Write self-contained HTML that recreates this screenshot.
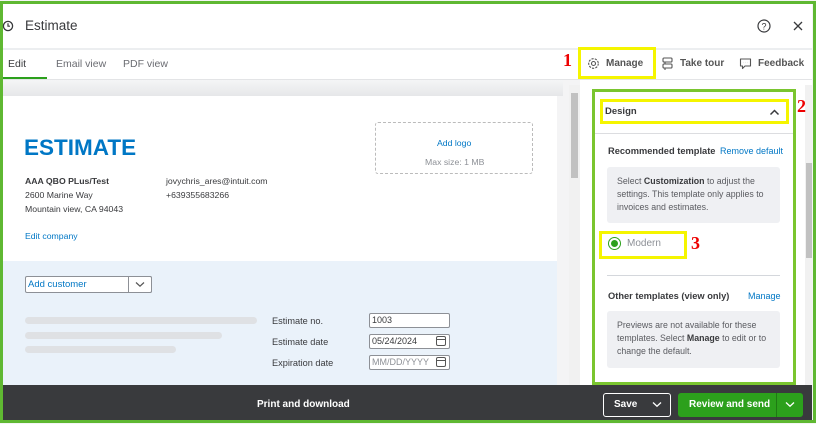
<!DOCTYPE html>
<html><head><style>
*{margin:0;padding:0;box-sizing:border-box}
body{width:816px;height:424px;overflow:hidden;background:#f4f5f4;font-family:"Liberation Sans",sans-serif;position:relative;color:#393a3d}
.a{position:absolute}
.t{font-size:10px;color:#393a3d;white-space:nowrap}
.lnk{color:#0077c5}
.in{position:absolute;height:15px;border:1px solid #8d9096;border-radius:2px;background:#fff;font-size:9px;padding:1px 2px;color:#393a3d}
.bar{position:absolute;height:7px;border-radius:4px;background:#dfe1e4}
.cal{position:absolute;width:10px;height:10px;border:1.3px solid #555;border-radius:2px}
.cal:before{content:"";position:absolute;left:0;right:0;top:2px;border-top:1.3px solid #555}
</style></head><body>
<div class="a" style="left:0;top:1px;width:816px;height:422px;border:3px solid #5fb832"></div>
<div class="a" style="left:3px;top:4px;width:809px;height:416px;background:#fff"></div>
<svg class="a" style="left:2px;top:20px" width="12" height="12" viewBox="0 0 12 12"><circle cx="6" cy="6" r="4.6" fill="none" stroke="#393a3d" stroke-width="1.3"/><path d="M6 3.3V6.2H8" fill="none" stroke="#393a3d" stroke-width="1.2"/></svg>
<div class="a" style="left:25px;top:18px;font-size:13.5px;color:#393a3d">Estimate</div>
<svg class="a" style="left:757px;top:19px" width="14" height="14" viewBox="0 0 14 14"><circle cx="7" cy="7" r="6" fill="none" stroke="#393a3d" stroke-width="1.2"/><text x="7" y="10.3" font-size="9" text-anchor="middle" fill="#393a3d" font-family="Liberation Sans">?</text></svg>
<svg class="a" style="left:793px;top:21px" width="10" height="10" viewBox="0 0 10 10"><path d="M1 1L9 9M9 1L1 9" stroke="#393a3d" stroke-width="1.3"/></svg>
<div class="a" style="left:3px;top:48px;width:809px;height:2px;background:#eceef0"></div>
<div class="a t" style="left:8px;top:58px;font-size:10.5px">Edit</div>
<div class="a t" style="left:56px;top:58px;font-size:10.5px;color:#6b6c72">Email view</div>
<div class="a t" style="left:123px;top:58px;font-size:10.5px;color:#6b6c72">PDF view</div>
<div class="a" style="left:3px;top:77px;width:44px;height:2px;background:#2ca01c"></div>
<div class="a" style="left:563px;top:50px;font-family:'Liberation Serif';font-weight:bold;font-size:18px;color:#e00">1</div>
<div class="a" style="left:578px;top:47px;width:78px;height:32px;border:3px solid #f5f500"></div>
<svg class="a" style="left:587px;top:57px" width="13" height="13" viewBox="0 0 13 13"><circle cx="6.5" cy="6.5" r="2" fill="none" stroke="#555" stroke-width="1.1"/><circle cx="6.5" cy="6.5" r="4.8" fill="none" stroke="#555" stroke-width="1.1" stroke-dasharray="2.2 1.2"/></svg>
<div class="a t" style="left:606px;top:58px;font-size:10px;font-weight:bold;color:#555">Manage</div>
<svg class="a" style="left:661px;top:57px" width="13" height="13" viewBox="0 0 13 13"><rect x="2" y="1" width="9" height="4" rx="1" fill="none" stroke="#555" stroke-width="1.1"/><rect x="2" y="7" width="9" height="4" rx="1" fill="none" stroke="#555" stroke-width="1.1"/><path d="M4 5V7M4 11V13" stroke="#555" stroke-width="1.1"/></svg>
<div class="a t" style="left:680px;top:58px;font-size:10px;font-weight:bold;color:#555">Take tour</div>
<svg class="a" style="left:739px;top:57px" width="13" height="13" viewBox="0 0 13 13"><path d="M1.5 2h10v7H6l-2.5 2.5V9h-2z" fill="none" stroke="#555" stroke-width="1.1" stroke-linejoin="round"/><path d="M4.5 5.5h.1M6.5 5.5h.1M8.5 5.5h.1" stroke="#555" stroke-width="1.2"/></svg>
<div class="a t" style="left:758px;top:58px;font-size:10px;font-weight:bold;color:#555">Feedback</div>
<div class="a" style="left:3px;top:79px;width:809px;height:1px;background:#e3e4e6"></div>
<div class="a" style="left:3px;top:80px;width:577px;height:305px;background:#f4f4f5"></div>
<div class="a" style="left:3px;top:80px;width:560px;height:16px;background:linear-gradient(#f4f5f6,#e6e7e9)"></div>
<div class="a" style="left:3px;top:96px;width:554px;height:165px;background:#fff"></div>
<div class="a" style="left:3px;top:261px;width:554px;height:124px;background:#eaf2fa"></div>
<div class="a" style="left:569px;top:85px;width:11px;height:300px;background:#f1f1f1"></div>
<div class="a" style="left:571px;top:93px;width:7px;height:85px;background:#c1c1c1"></div>
<div class="a" style="left:24px;top:135px;font-size:22.5px;font-weight:bold;color:#0077c5">ESTIMATE</div>
<div class="a t" style="left:25px;top:176px;font-size:8.7px;font-weight:bold">AAA QBO PLus/Test</div>
<div class="a t" style="left:25px;top:190px;font-size:8.7px">2600 Marine Way</div>
<div class="a t" style="left:25px;top:204px;font-size:8.7px">Mountain view, CA 94043</div>
<div class="a t" style="left:166px;top:176px;font-size:8.7px">jovychris_ares@intuit.com</div>
<div class="a t" style="left:166px;top:190px;font-size:8.7px">+639355683266</div>
<div class="a t lnk" style="left:25px;top:231px;font-size:8.7px">Edit company</div>
<div class="a" style="left:375px;top:122px;width:158px;height:52px;border:1px dashed #bbb;border-radius:3px"></div>
<div class="a t lnk" style="left:437px;top:138px;font-size:8.7px">Add logo</div>
<div class="a t" style="left:425px;top:157px;font-size:8.7px;color:#8d9096">Max size: 1 MB</div>
<div class="a" style="left:25px;top:276px;width:127px;height:17px;border:1px solid #8d9096;border-radius:2px;background:#fff;font-size:9.5px;color:#0077c5;padding:2px 2px">Add customer</div>
<div class="a" style="left:128px;top:276px;width:24px;height:17px;border:1px solid #8d9096;border-radius:0 2px 2px 0;background:#fff"></div>
<svg class="a" style="left:135px;top:281px" width="10" height="7" viewBox="0 0 10 7"><path d="M1 1.5L5 5.2L9 1.5" fill="none" stroke="#555" stroke-width="1.2"/></svg>
<div class="bar" style="left:25px;top:317px;width:232px"></div>
<div class="bar" style="left:25px;top:332px;width:197px"></div>
<div class="bar" style="left:25px;top:346px;width:151px"></div>
<div class="a t" style="left:272px;top:316px;font-size:9.2px">Estimate no.</div>
<div class="a t" style="left:272px;top:337px;font-size:9.2px">Estimate date</div>
<div class="a t" style="left:272px;top:358px;font-size:9.2px">Expiration date</div>
<div class="in" style="left:369px;top:313px;width:81px">1003</div>
<div class="in" style="left:369px;top:334px;width:81px">05/24/2024</div>
<div class="in" style="left:369px;top:355px;width:81px;color:#8d9096">MM/DD/YYYY</div>
<div class="cal" style="left:436px;top:336px"></div>
<div class="cal" style="left:436px;top:357px"></div>
<div class="a" style="left:805px;top:85px;width:7px;height:300px;background:#f1f1f1"></div>
<div class="a" style="left:806px;top:163px;width:6px;height:95px;background:#c1c1c1"></div>
<div class="a" style="left:592px;top:89px;width:204px;height:296px;border:3px solid #7ac52f"></div>
<div class="a" style="left:595px;top:133px;width:198px;height:1px;background:#dcdde0"></div>
<div class="a" style="left:600px;top:99px;width:189px;height:25px;border:3px solid #f5f500"></div>
<div class="a t" style="left:605px;top:106px;font-size:9.5px;font-weight:bold">Design</div>
<svg class="a" style="left:769px;top:108px" width="11" height="8" viewBox="0 0 11 8"><path d="M1.5 6.5L5.5 2.5L9.5 6.5" fill="none" stroke="#393a3d" stroke-width="1.5"/></svg>
<div class="a" style="left:797px;top:96px;font-family:'Liberation Serif';font-weight:bold;font-size:18px;color:#e00">2</div>
<div class="a t" style="left:608px;top:146px;font-size:9.3px;font-weight:bold">Recommended template</div>
<div class="a t lnk" style="left:720px;top:146px;font-size:9px">Remove default</div>
<div class="a" style="left:607px;top:167px;width:173px;height:56px;background:#eff0f3;border-radius:3px"></div>
<div class="a" style="left:617px;top:175px;font-size:8.8px;line-height:13px;color:#5a5b60;width:160px">Select <b style="color:#393a3d">Customization</b> to adjust the settings. This template only applies to invoices and estimates.</div>
<div class="a" style="left:599px;top:231px;width:88px;height:28px;border:3px solid #f5f500"></div>
<div class="a" style="left:608px;top:237px;width:13px;height:13px;border:1px solid #2ca01c;border-radius:50%"></div>
<div class="a" style="left:611px;top:240px;width:7px;height:7px;background:#2ca01c;border-radius:50%"></div>
<div class="a t" style="left:627px;top:238px;font-size:10px;color:#8d9096">Modern</div>
<div class="a" style="left:691px;top:233px;font-family:'Liberation Serif';font-weight:bold;font-size:18px;color:#e00">3</div>
<div class="a" style="left:607px;top:275px;width:173px;height:1px;background:#d4d7dc"></div>
<div class="a t" style="left:608px;top:291px;font-size:9.3px;font-weight:bold">Other templates (view only)</div>
<div class="a t lnk" style="left:748px;top:291px;font-size:9px">Manage</div>
<div class="a" style="left:607px;top:311px;width:173px;height:57px;background:#eff0f3;border-radius:3px"></div>
<div class="a" style="left:617px;top:319px;font-size:8.8px;line-height:13px;color:#5a5b60;width:160px">Previews are not available for these templates. Select <b style="color:#393a3d">Manage</b> to edit or to change the default.</div>
<div class="a" style="left:3px;top:385px;width:809px;height:35px;background:#393a3d"></div>
<div class="a t" style="left:257px;top:399px;font-size:10px;font-weight:bold;color:#fff">Print and download</div>
<div class="a" style="left:603px;top:393px;width:68px;height:24px;border:1px solid #fff;border-radius:3px"></div>
<div class="a t" style="left:614px;top:399px;font-size:10px;font-weight:bold;color:#fff">Save</div>
<svg class="a" style="left:652px;top:401px" width="10" height="7" viewBox="0 0 10 7"><path d="M1 1.5L5 5.2L9 1.5" fill="none" stroke="#fff" stroke-width="1.3"/></svg>
<div class="a" style="left:678px;top:393px;width:125px;height:24px;background:#2ca01c;border-radius:3px"></div>
<div class="a" style="left:776px;top:393px;width:1px;height:24px;background:#1f7a13"></div>
<div class="a t" style="left:689px;top:399px;font-size:10px;font-weight:bold;color:#fff">Review and send</div>
<svg class="a" style="left:785px;top:401px" width="10" height="7" viewBox="0 0 10 7"><path d="M1 1.5L5 5.2L9 1.5" fill="none" stroke="#fff" stroke-width="1.3"/></svg>
</body></html>
